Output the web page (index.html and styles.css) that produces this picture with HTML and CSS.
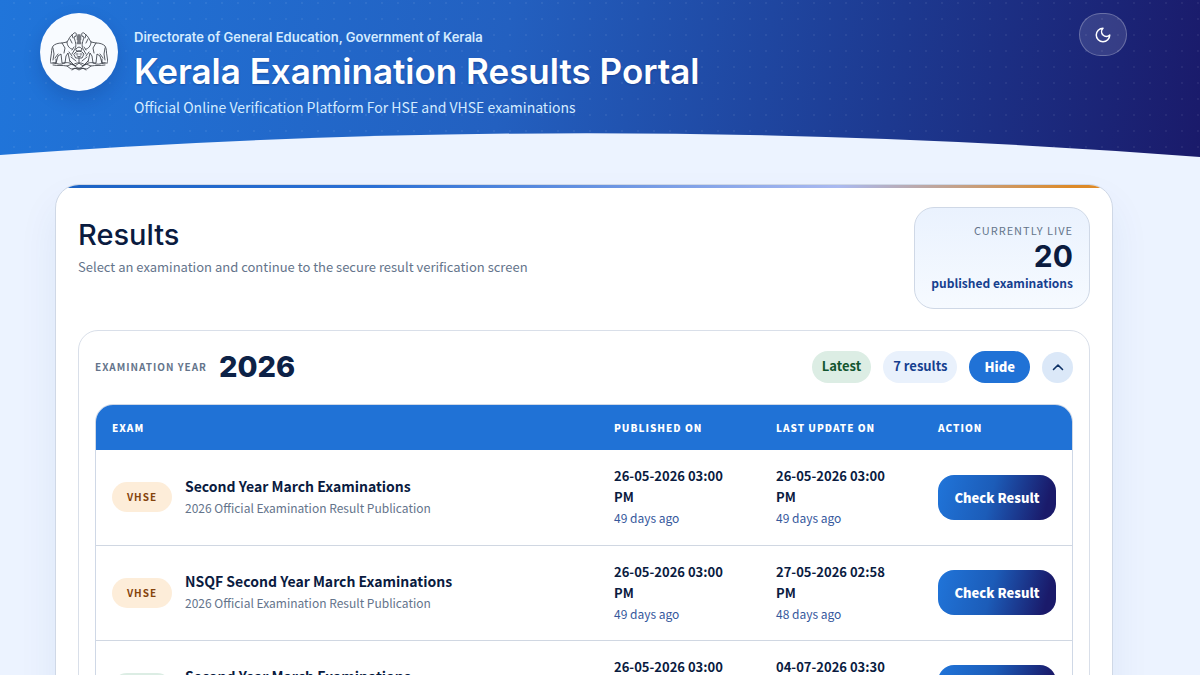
FILE: index.html
```html
<!DOCTYPE html>
<html lang="en">
<head>
<meta charset="utf-8">
<meta name="viewport" content="width=device-width, initial-scale=1">
<title>Kerala Examination Results Portal</title>
<link rel="stylesheet" href="styles.css">
</head>
<body>
<header class="hero">
  <div class="hero-inner">
    <span class="logo">
      <svg class="emblem" viewBox="0 0 58 40" role="img" aria-label="Government of Kerala emblem">
        <g id="elephant">
          <path d="M26 4C27 2 26 0 24 1L22 3C20 4 19 7 17 10L12 11C8 11 5 12 3 14 1 17 2 20 1 24L0 31M3 31H6L8 24 11 22 12 31H15L16 24 18 21 20 30M26 4 24 5C25 9 27 13 25 17L22 22"/>
          <path d="M17 10C17 14 20 17 22 17M12 11 15 16 14 21M3 16 4 22 3 28M20 7 22 11M6 31V27M8 22 5 26M22 3 23 6M19 20 22 24"/>
        </g>
        <use href="#elephant" transform="matrix(-1 0 0 1 58 0)"/>
        <path d="M28 3H30M27 5H31M27 7H31M28 9H30M27 11H31M28 3V12M30 3V12M26 17Q29 13 32 17L31 19H27ZM24 15 22 18M34 15 36 18M24 22Q26 19 29 19T34 22L32 26H26ZM26 22H28M30 22H32M27 24Q29 26 31 24M21 25 26 29M37 25 32 29M29 26V30"/>
        <path d="M1 31C5 30 8 33 12 32 16 30 19 30 23 33 27 30 31 30 35 33 39 30 42 30 46 32 50 33 53 30 57 31M3 33C8 34 12 33 17 34L22 32 29 37 36 32 41 34C46 33 50 34 55 33M17 34 21 37 29 36 37 37 41 34M20 29 25 34 29 31 33 34 38 29M22 38 25 36 29 38 33 36 36 38"/>
      </svg>
    </span>
    <div class="hero-text">
      <p class="eyebrow">Directorate of General Education, Government of Kerala</p>
      <h1 class="title">Kerala Examination Results Portal</h1>
      <p class="subtitle">Official Online Verification Platform For HSE and VHSE examinations</p>
    </div>
    <button class="theme" type="button" aria-label="Switch to dark theme">
      <svg viewBox="0 0 24 24" width="18" height="18"><path d="M12 3a6 6 0 0 0 9 9 9 9 0 1 1-9-9Z"/></svg>
    </button>
  </div>
  <svg class="curve" viewBox="0 0 1200 28" preserveAspectRatio="none" aria-hidden="true"><path d="M0 22Q600-22.500 1200 24V28H0Z"/></svg>
</header>
<main class="page">
  <section class="card">
    <div class="card-head">
      <div>
        <h2 class="heading">Results</h2>
        <p class="lead">Select an examination and continue to the secure result verification screen</p>
      </div>
      <div class="live">
        <span class="live-label">Currently live</span>
        <strong class="live-count">20</strong>
        <span class="live-note">published examinations</span>
      </div>
    </div>
    <section class="year">
      <div class="year-head">
        <div class="year-name"><span class="year-label">Examination year</span><h3 class="year-value">2026</h3></div>
        <div class="year-tools">
          <span class="chip chip-latest">Latest</span>
          <span class="chip chip-count">7 results</span>
          <button class="chip chip-hide" type="button">Hide</button>
          <button class="collapse" type="button" aria-label="Collapse 2026">
            <svg viewBox="0 0 12 12" width="12" height="12"><path d="M1.500 8.500 6 4l4.500 4.500"/></svg>
          </button>
        </div>
      </div>
      <div class="table-wrap">
        <table class="results">
          <colgroup><col><col class="col-date"><col class="col-date"><col class="col-action"></colgroup>
          <thead><tr><th>Exam</th><th>Published on</th><th>Last update on</th><th>Action</th></tr></thead>
          <tbody>
            <tr>
              <td><div class="exam"><span class="tag tag-vhse">VHSE</span><div><strong class="exam-name">Second Year March Examinations</strong><span class="exam-note">2026 Official Examination Result Publication</span></div></div></td>
              <td><time class="date">26-05-2026 03:00 PM</time><span class="ago">49 days ago</span></td>
              <td><time class="date">26-05-2026 03:00 PM</time><span class="ago">49 days ago</span></td>
              <td><button class="check" type="button">Check Result</button></td>
            </tr>
            <tr>
              <td><div class="exam"><span class="tag tag-vhse">VHSE</span><div><strong class="exam-name">NSQF Second Year March Examinations</strong><span class="exam-note">2026 Official Examination Result Publication</span></div></div></td>
              <td><time class="date">26-05-2026 03:00 PM</time><span class="ago">49 days ago</span></td>
              <td><time class="date">27-05-2026 02:58 PM</time><span class="ago">48 days ago</span></td>
              <td><button class="check" type="button">Check Result</button></td>
            </tr>
            <tr>
              <td><div class="exam"><span class="tag tag-hse">HSE</span><div><strong class="exam-name">Second Year March Examinations</strong><span class="exam-note">2026 Official Examination Result Publication</span></div></div></td>
              <td><time class="date">26-05-2026 03:00 PM</time><span class="ago">49 days ago</span></td>
              <td><time class="date">04-07-2026 03:30 PM</time><span class="ago">10 days ago</span></td>
              <td><button class="check" type="button">Check Result</button></td>
            </tr>
          </tbody>
        </table>
      </div>
    </section>
  </section>
</main>
</body>
</html>
```
FILE: styles.css
```css
* { box-sizing: border-box; }
:root {
  --body: "Noto Sans CJK SC", "Noto Sans", sans-serif;
  --display: Inter, "Noto Sans", sans-serif;
  --navy: #0a1b3f;
  --muted: #64748b;
  --line: #cfd8e6;
  --blue: #2072d6;
}
body { margin: 0; background: #ecf3ff; color: var(--navy); font-family: var(--body); font-size: 14px; line-height: 21px; }
h1, h2, h3, p { margin: 0; }
button { border: 0; padding: 0; font-family: inherit; cursor: pointer; }
svg { display: block; fill: none; stroke: currentColor; stroke-linecap: round; stroke-linejoin: round; }

.hero {
  background:
    radial-gradient(circle at 1px 1px, rgba(255, 255, 255, .06) 1px, transparent 1px) 13px 2px / 16px 16px,
    linear-gradient(98deg, #2075da 0%, #2360c0 42%, #1d3990 74%, #1a1a6a 100%);
  color: #fff;
}
.hero-inner { display: flex; align-items: flex-start; gap: 16px; padding: 13px 73px 0 40px; }
.logo { flex: none; display: grid; place-items: center; width: 78px; height: 78px; border-radius: 50%; background: #f8fbff; box-shadow: 0 8px 18px rgba(10, 30, 90, .18); }
.emblem { width: 58px; height: 40px; color: #2f333c; stroke-width: .8; }
.hero-text { flex: 1; padding-top: 14px; }
.eyebrow { font: 600 13px/20px var(--display); color: #d4ebff; }
.title { font: 600 35px/48px var(--display); text-shadow: 0 1px 2px rgba(0, 20, 80, .3); }
.subtitle { font-size: 14px; line-height: 24px; color: #d4ebff; }
.theme { display: grid; place-items: center; width: 48px; height: 43px; border: 1px solid rgba(255, 255, 255, .25); border-radius: 22px; background: rgba(255, 255, 255, .12); color: #fff; stroke-width: 2; }
.curve { width: 100%; height: 28px; margin-top: 14px; fill: #ecf3ff; stroke: none; }

.page { padding: 23px 87px 32px 55px; }
.card {
  position: relative; overflow: hidden; padding: 22px;
  border: 1px solid var(--line); border-radius: 24px; background: #fff;
  box-shadow: 0 20px 40px rgba(30, 70, 150, .07);
}
.card::before { content: ""; position: absolute; inset: -1px -1px auto; height: 4px; background: linear-gradient(90deg, #1b62c4, #2a6fd4 30%, #a9b9f0 74%, #dd8a28 96%); }
.card-head { display: flex; justify-content: space-between; align-items: flex-start; }
.heading { margin-top: 10px; font: 500 29px/36px var(--display); }
.lead { margin-top: 3px; line-height: 22px; color: var(--muted); font-size: 13px; }
.live { display: flex; flex-direction: column; align-items: flex-end; min-width: 175px; padding: 13px 16px 15px; border: 1px solid var(--line); border-radius: 20px; background: linear-gradient(#eaf2fe, #f6faff); }
.live-label { font-size: 11px; line-height: 18px; letter-spacing: 1px; text-transform: uppercase; color: var(--muted); }
.live-count { font: 700 30px/34px var(--display); }
.live-note { font-size: 12px; line-height: 20px; font-weight: 700; color: #163f8f; }

.year { margin-top: 21px; padding: 20px 16px; border: 1px solid #d9dfe9; border-radius: 20px; }
.year-head { display: flex; justify-content: space-between; align-items: center; height: 32px; }
.year-name, .year-tools { display: flex; align-items: center; gap: 12px; }
.year-label { font-size: 10px; font-weight: 700; line-height: 24px; letter-spacing: 1px; text-transform: uppercase; color: var(--muted); }
.year-value { font: 800 29px/32px var(--display); color: #0d2247; }
.chip { height: 32px; padding: 0 10px; border-radius: 16px; font-size: 13px; line-height: 30px; font-weight: 700; }
.chip-latest { background: #dcede4; color: #12552f; }
.chip-count { background: #e9f1fc; color: #163f8f; }
.chip-hide { padding: 0 15px; background: var(--blue); color: #fff; font-weight: 900; }
.collapse { display: grid; place-items: center; width: 31px; height: 31px; border-radius: 50%; background: #dbe8f8; color: #0d3166; stroke-width: 1.6; }

.table-wrap { margin-top: 21px; overflow: hidden; border: 1px solid var(--line); border-radius: 18px; }
.results { width: 100%; border-collapse: collapse; table-layout: fixed; }
.col-date { width: 162px; }
.col-action { width: 150px; }
.results th { height: 45px; padding: 0 16px; background: var(--blue); color: #fff; font-size: 10px; line-height: 18px; font-weight: 900; letter-spacing: 1px; text-align: left; text-transform: uppercase; }
.results td { height: 95px; padding: 15px 16px; border-bottom: 1px solid #d0d7e2; }
.exam { display: flex; align-items: center; gap: 13px; }
.tag { flex: none; width: 60px; border-radius: 15px; font-size: 10px; line-height: 30px; font-weight: 700; letter-spacing: 1px; text-align: center; }
.tag-vhse { background: #fdedd9; color: #85440c; }
.tag-hse { background: #dcede4; color: #12552f; }
.exam-name, .exam-note, .date, .ago { display: block; }
.exam-name, .date { font-size: 13px; line-height: 21px; font-weight: 700; }
.exam-name { font-size: 14px; }
.exam-note { font-size: 12px; line-height: 22px; color: var(--muted); }
.ago { font-size: 12px; line-height: 22px; color: #35589c; }
.check { display: block; width: 100%; height: 45px; border-radius: 16px; background: linear-gradient(105deg, #2075da, #1c5cb8 45%, #1a1a6a 90%); color: #fff; font-size: 13px; font-weight: 900; }
```
